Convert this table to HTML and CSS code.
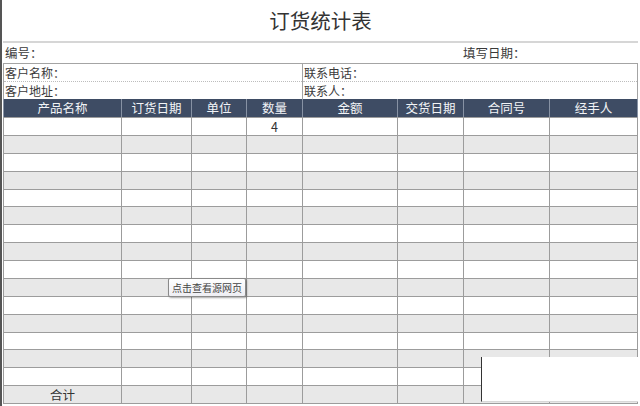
FILE: index.html
```html
<!DOCTYPE html>
<html lang="zh-CN">
<head>
<meta charset="utf-8">
<title>订货统计表</title>
<link rel="stylesheet" href="styles.css">
</head>
<body>
<div class="page">
  <div class="sheet">
    <h1 class="title">订货统计表</h1>
    <div class="meta">
      <div class="meta-left">编号<span class="colon">：</span></div>
      <div class="meta-right">填写日期<span class="colon">：</span></div>
    </div>
    <div class="info">
      <div class="info-cell left first">客户名称<span class="colon">：</span></div>
      <div class="info-cell right first">联系电话<span class="colon">：</span></div>
      <div class="info-cell left">客户地址<span class="colon">：</span></div>
      <div class="info-cell right">联系人<span class="colon">：</span></div>
    </div>
    <div class="head">
      <div class="hcell">产品名称</div>
      <div class="hcell">订货日期</div>
      <div class="hcell">单位</div>
      <div class="hcell">数量</div>
      <div class="hcell">金额</div>
      <div class="hcell">交货日期</div>
      <div class="hcell">合同号</div>
      <div class="hcell">经手人</div>
    </div>
    <div class="body" id="body"></div>
  </div>
  <div class="tooltip">点击查看源网页</div>
  <div class="cover"></div>
</div>
<script src="script.js"></script>
</body>
</html>
```

FILE: script.js
```js
(function () {
  var body = document.getElementById('body');
  var html = '';
  for (var r = 0; r < 16; r++) {
    var cls = r % 2 === 1 ? 'cell alt' : 'cell';
    for (var c = 0; c < 8; c++) {
      var txt = '';
      if (r === 0 && c === 3) txt = '4';
      if (r === 15 && c === 0) txt = '合计';
      html += '<div class="' + cls + '">' + txt + '</div>';
    }
  }
  body.innerHTML = html;
})();
```

FILE: styles.css
```css
* { box-sizing: border-box; }
html, body {
  margin: 0;
  padding: 0;
  background: #fff;
}
body {
  width: 640px;
  height: 406px;
  overflow: hidden;
  font-family: "Noto Sans CJK SC", "Noto Sans", sans-serif;
  color: #3a3a3a;
}
.page {
  position: relative;
  width: 640px;
  height: 406px;
  border-left: 2px solid #555;
}
.sheet {
  --cols: 117px 69px 54px 55px 94px 65px 85px 87px;
  margin-left: 1px;
  width: 635px;
  display: flex;
  flex-direction: column;
}
.colon {
  font-family: "Noto Sans CJK TC", "Noto Sans CJK SC", sans-serif;
  line-height: 1;
}
.title {
  margin: 0;
  height: 43px;
  line-height: 41px;
  border-bottom: 2px solid #d6d6d6;
  text-align: center;
  font-size: 20.5px;
  font-weight: normal;
  color: #333;
}
.meta {
  height: 20px;
  display: grid;
  grid-template-columns: var(--cols);
  column-gap: 1px;
  padding: 0 1px;
  font-size: 12.5px;
  line-height: 20px;
}
.meta-left { grid-column: 1 / 7; padding-left: 1px; }
.meta-right { grid-column: 7 / 9; margin-left: -1px; }
.info {
  display: grid;
  grid-template-columns: var(--cols);
  column-gap: 1px;
  border: 1px solid #a4a4a4;
  border-bottom: none;
  background: #a4a4a4;
  font-size: 12px;
}
.info-cell {
  background: #fff;
  height: 17px;
  line-height: 17px;
  padding-left: 1px;
  overflow: hidden;
}
.info-cell.first {
  height: 18px;
  border-bottom: 1px dotted #bdbdbd;
}
.info-cell.left { grid-column: 1 / 5; }
.info-cell.right { grid-column: 5 / 9; }
.head {
  display: grid;
  grid-template-columns: var(--cols);
  column-gap: 1px;
  padding: 0 1px;
  height: 18px;
  background: #8792a4;
}
.hcell {
  background: #3e4c64;
  color: #f2f4f7;
  font-size: 12.5px;
  line-height: 18px;
  text-align: center;
}
.body {
  display: grid;
  grid-template-columns: var(--cols);
  grid-auto-rows: 16.875px;
  gap: 1px;
  padding: 1px;
  background: #9c9c9c;
}
.cell {
  background: #fff;
  font-size: 12.5px;
  line-height: 17px;
  text-align: center;
  color: #333;
}
.cell.alt { background: #e8e8e8; }
.tooltip {
  position: absolute;
  left: 166px;
  top: 278px;
  width: 78px;
  height: 19px;
  border: 1px solid #8a8a8a;
  border-radius: 2px;
  background: linear-gradient(#ffffff, #eeeef3);
  box-shadow: 1px 1px 2px rgba(0, 0, 0, 0.35);
  font-size: 10px;
  line-height: 17px;
  text-align: center;
  color: #444;
}
.cover {
  position: absolute;
  left: 479px;
  top: 357px;
  width: 157px;
  height: 45px;
  background: #fff;
  border-left: 1px solid #333;
  border-bottom: 1px solid #d8d8d8;
}
```
